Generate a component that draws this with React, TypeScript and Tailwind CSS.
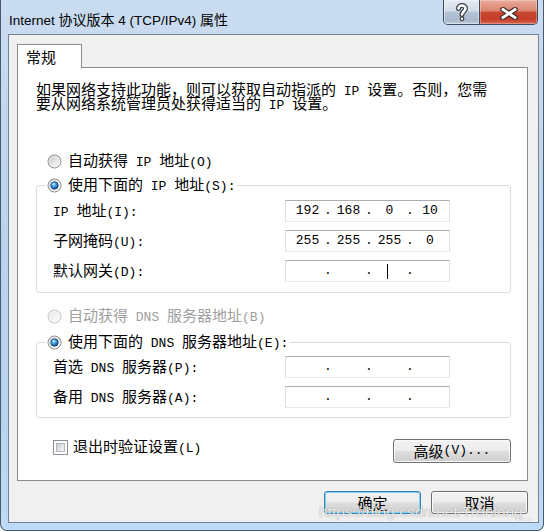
import React from "react";

function T({ t }: { t: string }) {
  const parts = t.match(/[\x20-\x7e]+|[^\x20-\x7e]+/g) || [];
  return (
    <>
      {parts.map((p, i) =>
        /^[\x20-\x7e]/.test(p) ? (
          <span key={i} className="font-['Liberation_Mono',monospace] text-[13px] whitespace-pre">
            {p}
          </span>
        ) : (
          <span key={i}>{p}</span>
        )
      )}
    </>
  );
}

function Radio({ checked, disabled }: { checked?: boolean; disabled?: boolean }) {
  const id = checked ? "rc" : disabled ? "rd" : "ru";
  return (
    <svg width="15" height="15" viewBox="0 0 15 15" className="shrink-0">
      <defs>
        <linearGradient id={`${id}-bg`} x1="0" y1="0" x2="1" y2="1">
          <stop offset="0" stopColor={disabled ? "#e4e4e4" : "#c6c6c6"} />
          <stop offset="1" stopColor="#ffffff" />
        </linearGradient>
        <radialGradient id={`${id}-dot`} cx="0.38" cy="0.32" r="0.75">
          <stop offset="0" stopColor="#c4f0ff" />
          <stop offset="0.45" stopColor="#3b9ae0" />
          <stop offset="1" stopColor="#0b3a76" />
        </radialGradient>
      </defs>
      <circle
        cx="7.5"
        cy="7.5"
        r="6.5"
        fill={`url(#${id}-bg)`}
        stroke={disabled ? "#c2c2c2" : "#8a8a8a"}
        strokeWidth="1"
      />
      <circle cx="7.5" cy="7.5" r="5.3" fill="none" stroke="#ffffff" strokeOpacity="0.7" strokeWidth="0.8" />
      {checked && (
        <circle cx="7.5" cy="7.5" r="3.7" fill={`url(#${id}-dot)`} stroke="#16457c" strokeWidth="0.8" />
      )}
    </svg>
  );
}

function RadioLabel({ checked, disabled, label }: { checked?: boolean; disabled?: boolean; label: string }) {
  return (
    <div className={`flex items-center h-[16px] ${disabled ? "text-[#a0a0a0]" : "text-black"}`}>
      <Radio checked={checked} disabled={disabled} />
      <span className="ml-[6px] leading-[16px] whitespace-nowrap">
        <T t={label} />
      </span>
    </div>
  );
}

function IpField({ v, cursorSeg }: { v: string[]; cursorSeg?: number }) {
  return (
    <div className="w-[165px] h-[22px] bg-white border border-[#dbdfe6] border-t-[#abadb3] border-b-[#e3e9ef] flex items-center pl-[3px] font-['Liberation_Mono',monospace] text-[13px] leading-[16px] shrink-0">
      {v.map((s, i) => (
        <React.Fragment key={i}>
          {i > 0 && <span className="w-[4px] flex justify-center">.</span>}
          {cursorSeg === i ? (
            <span className="w-[37px] h-[16px] flex items-center">
              <span className="ml-[16px] w-px h-[15px] bg-black" />
            </span>
          ) : (
            <span className={`${i === 3 ? "w-[36px]" : "w-[37px]"} flex justify-center whitespace-pre`}>{s}</span>
          )}
        </React.Fragment>
      ))}
    </div>
  );
}

function FieldRow({ label, v, cursorSeg }: { label: string; v: string[]; cursorSeg?: number }) {
  return (
    <div className="flex items-center h-[22px]">
      <div className="w-[232px] leading-[16px] whitespace-nowrap">
        <T t={label} />
      </div>
      <IpField v={v} cursorSeg={cursorSeg} />
    </div>
  );
}

const btnBase =
  "flex items-center justify-center rounded-[3px] border bg-[linear-gradient(to_bottom,#f3f3f3_0%,#ebebeb_48%,#dddddd_52%,#cfcfcf_100%)]";

export default function App() {
  const empty = ["", "", "", ""];
  return (
    <div className="w-[546px] h-[532px] bg-white relative overflow-hidden font-['Noto_Sans_CJK_SC',sans-serif] text-[15px] text-black">
      <div className="w-[544px] h-[531px] border-x border-b border-[#4a5a6e] rounded-b-[7px] bg-[linear-gradient(to_bottom,#cadcf0_0%,#bcd4ee_40%,#b8d3f0_75%,#bfdaf8_100%)] flex flex-col pl-[7px] pr-[4px] pb-[7px]">
        {/* Title bar */}
        <div className="h-[34px] flex items-start -ml-[7px] -mr-[4px]">
          <div className="pl-[8px] pt-[9px] text-[14px] leading-[20px] whitespace-nowrap">
            <span className="font-['Liberation_Sans',sans-serif] text-[13.5px]">Internet </span>
            <span>协议版本</span>
            <span className="font-['Liberation_Sans',sans-serif] text-[13.5px]"> 4 (TCP/IPv4) </span>
            <span>属性</span>
          </div>
          <div className="ml-auto mr-[5px] flex h-[25px] border-x border-b border-[#3d4b5d] rounded-b-[5px] overflow-hidden">
            <div className="w-[35px] h-full flex items-center justify-center bg-[linear-gradient(to_bottom,#e4ebf3_0%,#d2dce8_45%,#b4c3d4_52%,#a8b9cc_85%,#bfcddd_100%)] shadow-[inset_0_0_0_1px_rgba(255,255,255,0.4)]">
              <svg width="14" height="20" viewBox="0 0 14 20">
                <path d="M3.5 6.5 C3.5 2.5 10.5 2.5 10.5 6.5 C10.5 9 7 9.5 7 12.5" fill="none" stroke="#3a3f47" strokeWidth="5" strokeLinecap="round" />
                <circle cx="7" cy="16.8" r="2.4" fill="#3a3f47" />
                <path d="M3.5 6.5 C3.5 2.5 10.5 2.5 10.5 6.5 C10.5 9 7 9.5 7 12.5" fill="none" stroke="#ffffff" strokeWidth="2.6" strokeLinecap="round" />
                <circle cx="7" cy="16.8" r="1.2" fill="#ffffff" />
              </svg>
            </div>
            <div className="w-[58px] h-full border-l border-[#3d4b5d] flex items-center justify-center bg-[linear-gradient(to_bottom,#eaa99a_0%,#dd8571_45%,#c8462f_52%,#c43e29_80%,#d9684f_100%)] shadow-[inset_0_0_0_1px_rgba(255,255,255,0.3)]">
              <svg width="18" height="13" viewBox="0 0 18 13" className="mt-[3px]">
                <path d="M3 2.5 L15 10.5 M15 2.5 L3 10.5" stroke="#3a2a28" strokeWidth="5.2" strokeLinecap="square" />
                <path d="M3 2.5 L15 10.5 M15 2.5 L3 10.5" stroke="#ffffff" strokeWidth="2.8" strokeLinecap="square" />
              </svg>
            </div>
          </div>
        </div>

        {/* Client area */}
        <div className="flex-1 border border-[#768494] bg-[#f0f0f0] pt-[9px] pl-[8px] pr-[10px] pb-[8px] flex flex-col">
          <div className="h-[24px] w-[65px] -mb-px relative z-10 bg-white border-x border-t border-[#898c95] pl-[8px] flex items-center leading-[16px]">
            常规
          </div>
          <div className="border border-[#898c95] bg-white pt-[14px] pl-[18px] pr-[16px] pb-[17px] flex flex-col">
            <div className="h-[14px] leading-[14px] whitespace-nowrap">
              <T t="如果网络支持此功能，则可以获取自动指派的 IP 设置。否则，您需" />
            </div>
            <div className="h-[14px] leading-[14px] whitespace-nowrap">
              <T t="要从网络系统管理员处获得适当的 IP 设置。" />
            </div>

            <div className="mt-[43px] pl-[11px]">
              <RadioLabel label="自动获得 IP 地址(O)" />
            </div>

            <fieldset className="mt-[8px] border border-[#d5dfe5] rounded-[3px] px-[8px] pb-[10px]">
              <legend className="px-[2px] h-[16px] flex items-center">
                <RadioLabel checked label="使用下面的 IP 地址(S):" />
              </legend>
              <div className="pt-[7px] pl-[8px] flex flex-col gap-[8px]">
                <FieldRow label="IP 地址(I):" v={["192", "168", "0", "10"]} />
                <FieldRow label="子网掩码(U):" v={["255", "255", "255", "0"]} />
                <FieldRow label="默认网关(D):" v={empty} cursorSeg={2} />
              </div>
            </fieldset>

            <div className="mt-[15px] pl-[11px]">
              <RadioLabel disabled label="自动获得 DNS 服务器地址(B)" />
            </div>

            <fieldset className="mt-[10px] border border-[#d5dfe5] rounded-[3px] px-[8px] pb-[9px]">
              <legend className="px-[2px] h-[16px] flex items-center">
                <RadioLabel checked label="使用下面的 DNS 服务器地址(E):" />
              </legend>
              <div className="pt-[6px] pl-[8px] flex flex-col gap-[8px]">
                <FieldRow label="首选 DNS 服务器(P):" v={empty} />
                <FieldRow label="备用 DNS 服务器(A):" v={empty} />
              </div>
            </fieldset>

            <div className="mt-[21px] flex items-start justify-between">
              <div className="pl-[17px] h-[16px] flex items-center">
                <div className="w-[15px] h-[15px] border border-[#8e8f8f] bg-white p-[2px] shrink-0">
                  <div className="w-full h-full border border-[#b4b8be] bg-[linear-gradient(135deg,#c8ccd2_0%,#e6e8ea_60%,#f5f5f5_100%)]" />
                </div>
                <span className="ml-[5px] leading-[16px] whitespace-nowrap">
                  <T t="退出时验证设置(L)" />
                </span>
              </div>
              <div className={`${btnBase} w-[118px] h-[24px] border-[#707070] shadow-[inset_0_0_0_1px_#fbfbfb] leading-[16px]`}>
                <T t="高级(V)..." />
              </div>
            </div>
          </div>

          <div className="mt-[10px] flex justify-end gap-[10px]">
            <div className={`${btnBase} w-[97px] h-[23px] border-[#3c7fb1] shadow-[inset_0_0_0_1px_#7fd0f5] leading-[16px]`}>
              确定
            </div>
            <div className={`${btnBase} w-[97px] h-[23px] border-[#707070] shadow-[inset_0_0_0_1px_#fbfbfb] leading-[16px]`}>
              取消
            </div>
          </div>
        </div>
      </div>

      <div className="absolute left-[319px] top-[502px] pointer-events-none font-['Liberation_Sans',sans-serif] text-[15.5px] leading-[20px] text-white/85 [text-shadow:0_0_1px_rgba(70,70,70,0.7)] whitespace-nowrap">
        https://blog.csdn.net/Tronlong_
      </div>
    </div>
  );
}
